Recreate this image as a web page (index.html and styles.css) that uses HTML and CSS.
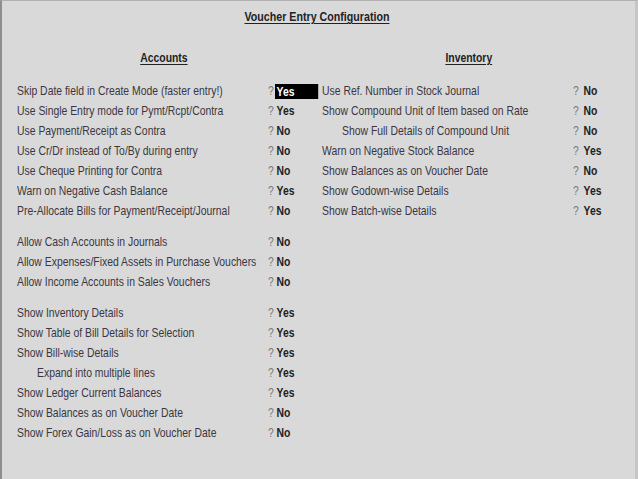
FILE: index.html
```html
<!DOCTYPE html>
<html>
<head>
<meta charset="utf-8">
<link rel="stylesheet" href="styles.css">
</head>
<body>
<div class="screen">
  <h1 class="title">Voucher Entry Configuration</h1>
  <div class="columns">
    <section class="col">
      <h2 class="head">Accounts</h2>
      <div class="group">
        <div class="row"><span class="lbl">Skip Date field in Create Mode (faster entry!)</span><span class="q">?</span><span class="val sel">Yes</span></div>
        <div class="row"><span class="lbl">Use Single Entry mode for Pymt/Rcpt/Contra</span><span class="q">?</span><span class="val">Yes</span></div>
        <div class="row"><span class="lbl">Use Payment/Receipt as Contra</span><span class="q">?</span><span class="val">No</span></div>
        <div class="row"><span class="lbl">Use Cr/Dr instead of To/By during entry</span><span class="q">?</span><span class="val">No</span></div>
        <div class="row"><span class="lbl">Use Cheque Printing for Contra</span><span class="q">?</span><span class="val">No</span></div>
        <div class="row"><span class="lbl">Warn on Negative Cash Balance</span><span class="q">?</span><span class="val">Yes</span></div>
        <div class="row"><span class="lbl">Pre-Allocate Bills for Payment/Receipt/Journal</span><span class="q">?</span><span class="val">No</span></div>
      </div>
      <div class="group">
        <div class="row"><span class="lbl">Allow Cash Accounts in Journals</span><span class="q">?</span><span class="val">No</span></div>
        <div class="row"><span class="lbl">Allow Expenses/Fixed Assets in Purchase Vouchers</span><span class="q">?</span><span class="val">No</span></div>
        <div class="row"><span class="lbl">Allow Income Accounts in Sales Vouchers</span><span class="q">?</span><span class="val">No</span></div>
      </div>
      <div class="group">
        <div class="row"><span class="lbl">Show Inventory Details</span><span class="q">?</span><span class="val">Yes</span></div>
        <div class="row"><span class="lbl">Show Table of Bill Details for Selection</span><span class="q">?</span><span class="val">Yes</span></div>
        <div class="row"><span class="lbl">Show Bill-wise Details</span><span class="q">?</span><span class="val">Yes</span></div>
        <div class="row"><span class="lbl sub">Expand into multiple lines</span><span class="q">?</span><span class="val">Yes</span></div>
        <div class="row"><span class="lbl">Show Ledger Current Balances</span><span class="q">?</span><span class="val">Yes</span></div>
        <div class="row"><span class="lbl">Show Balances as on Voucher Date</span><span class="q">?</span><span class="val">No</span></div>
        <div class="row"><span class="lbl">Show Forex Gain/Loss as on Voucher Date</span><span class="q">?</span><span class="val">No</span></div>
      </div>
    </section>
    <section class="col">
      <h2 class="head">Inventory</h2>
      <div class="group">
        <div class="row"><span class="lbl">Use Ref. Number in Stock Journal</span><span class="q">?</span><span class="val">No</span></div>
        <div class="row"><span class="lbl">Show Compound Unit of Item based on Rate</span><span class="q">?</span><span class="val">No</span></div>
        <div class="row"><span class="lbl sub">Show Full Details of Compound Unit</span><span class="q">?</span><span class="val">No</span></div>
        <div class="row"><span class="lbl">Warn on Negative Stock Balance</span><span class="q">?</span><span class="val">Yes</span></div>
        <div class="row"><span class="lbl">Show Balances as on Voucher Date</span><span class="q">?</span><span class="val">No</span></div>
        <div class="row"><span class="lbl">Show Godown-wise Details</span><span class="q">?</span><span class="val">Yes</span></div>
        <div class="row"><span class="lbl">Show Batch-wise Details</span><span class="q">?</span><span class="val">Yes</span></div>
      </div>
    </section>
  </div>
</div>
</body>
</html>
```

FILE: styles.css
```css
html, body {
  margin: 0;
  padding: 0;
  background: #d9d9d9;
}
body {
  width: 638px;
  height: 479px;
  overflow: hidden;
  font-family: "Liberation Sans", Arial, sans-serif;
  font-size: 13px;
  color: #3b3742;
}
.screen {
  box-sizing: border-box;
  width: 638px;
  height: 479px;
  border-left: 2px solid #8e8e8e;
  border-top: 1px solid #b0b0b0;
  border-right: 3px solid #c6c6c6;
  padding: 6px 0 0 15px;
}
.title {
  margin: 0;
  padding-right: 22px;
  font-size: 13px;
  font-weight: bold;
  line-height: 20px;
  text-align: center;
  color: #222;
  transform: scaleX(0.82);
}
.title, .head {
  text-decoration: underline;
  text-underline-offset: 2px;
}
.columns {
  display: grid;
  grid-template-columns: 305px 300px;
  margin-top: 21px;
}
.head {
  margin: 0 0 13px 0;
  font-size: 13px;
  font-weight: bold;
  line-height: 20px;
  color: #222;
  text-align: center;
  transform: scaleX(0.8);
}
.col:first-child .head {
  padding-right: 14px;
}
.col:last-child .head {
  padding-right: 8px;
}
.group {
  margin-bottom: 11px;
}
.row {
  display: grid;
  grid-template-columns: 251px 7px 54px;
  height: 20px;
  line-height: 20px;
  white-space: nowrap;
}
.col:last-child .row {
  grid-template-columns: 251px 9px 54px;
}
.lbl, .q, .val {
  transform: scaleX(0.8);
  transform-origin: left center;
}
.lbl.sub {
  padding-left: 25px;
}
.q {
  color: #777;
}
.val {
  padding-left: 2px;
  font-weight: bold;
  color: #222;
}
.val.sel {
  background: #000;
  color: #fff;
  height: 15px;
  line-height: 15px;
  margin-top: 3px;
}
```
